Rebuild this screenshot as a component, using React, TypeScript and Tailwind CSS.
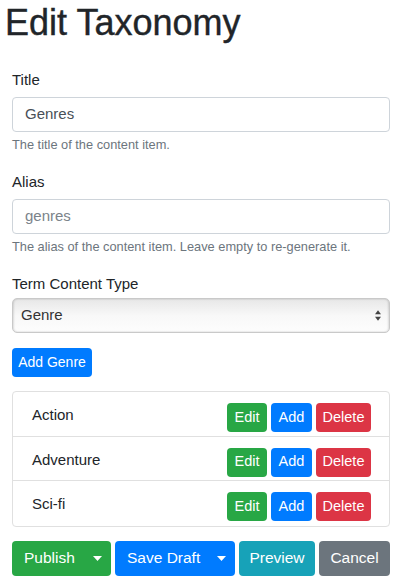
import React from 'react'

const font = { fontFamily: '"Liberation Sans", Arial, sans-serif' }

const rows = ['Action', 'Adventure', 'Sci-fi']

const Caret = () => (
  <svg width="9" height="5" viewBox="0 0 9 5" className="block">
    <path d="M0 0 L9 0 L4.5 5 Z" fill="white" />
  </svg>
)

const App: React.FunctionComponent = () => {
  return (
    <div className="w-[400px] h-[586px] bg-white text-[#212529] pl-[12px] pr-[10px] pt-[2px]" style={font}>
      <h1 className="text-[36px] leading-[42px] font-medium -ml-[7px] [-webkit-text-stroke:0.4px_#212529]">Edit Taxonomy</h1>

      {/* title */}
      <div className="mt-[25px]">
        <label className="block text-[15px] leading-[22px]">Title</label>
        <div className="mt-[6px] h-[35px] border border-[#ced4da] rounded-[4px] flex items-center px-[12px] text-[15px] text-[#495057]">
          Genres
        </div>
        <p className="mt-[4px] text-[12.8px] leading-[18px] text-[#6c757d]">The title of the content item.</p>
      </div>

      {/* alias */}
      <div className="mt-[17px]">
        <label className="block text-[15px] leading-[22px]">Alias</label>
        <div className="mt-[6px] h-[35px] border border-[#ced4da] rounded-[4px] flex items-center px-[12px] text-[15px] text-[#7b838a]">
          genres
        </div>
        <p className="mt-[4px] text-[12.8px] leading-[18px] text-[#6c757d]">
          The alias of the content item. Leave empty to re-generate it.
        </p>
      </div>

      {/* content type */}
      <div className="mt-[17px]">
        <label className="block text-[15px] leading-[22px]">Term Content Type</label>
        <div className="mt-[3px] h-[35px] border border-[#c9c9c9] rounded-[5px] flex items-center justify-between pl-[8px] pr-[8px] text-[15px] text-[#333] bg-gradient-to-b from-[#e7e7e7] via-[#f8f8f8] to-[#fdfdfd] shadow-[inset_1px_0_2px_rgba(0,0,0,0.12),inset_-1px_0_2px_rgba(0,0,0,0.12)]">
          <span>Genre</span>
          <svg width="6" height="11" viewBox="0 0 7 12">
            <path d="M3.5 0 L7 4.6 L0 4.6 Z" fill="#444" />
            <path d="M0 7.4 L7 7.4 L3.5 12 Z" fill="#444" />
          </svg>
        </div>
      </div>

      <button className="mt-[15px] h-[29px] w-[80px] rounded-[4px] bg-[#007bff] text-white text-[14px]">
        Add Genre
      </button>

      {/* terms */}
      <div className="mt-[14px] border border-[#e0e0e0] rounded-[4px]">
        {rows.map((r, i) => (
          <div
            key={r}
            className={
              'h-[44.5px] flex items-start justify-between pl-[19px] pr-[18px] pt-[11px]' +
              (i < rows.length - 1 ? ' border-b border-[#e0e0e0]' : '')
            }
          >
            <span className="text-[15px] leading-[22px] mt-[1px]">{r}</span>
            <div className="flex gap-[4px] text-[14.5px] text-white">
              <button className="h-[29px] w-[40px] rounded-[4px] bg-[#28a745]">Edit</button>
              <button className="h-[29px] w-[41px] rounded-[4px] bg-[#007bff]">Add</button>
              <button className="h-[29px] w-[55px] rounded-[4px] bg-[#dc3545]">Delete</button>
            </div>
          </div>
        ))}
      </div>

      {/* actions */}
      <div className="mt-[14px] flex gap-[4px] text-[15.5px] text-white">
        <div className="flex h-[35px] rounded-[4px] bg-[#28a745] w-[99px]">
          <button className="pl-[12px] pr-[10px]">Publish</button>
          <span className="flex-1 flex items-center justify-center"><Caret /></span>
        </div>
        <div className="flex h-[35px] rounded-[4px] bg-[#007bff] w-[120px]">
          <button className="pl-[12px] pr-[8px]">Save Draft</button>
          <span className="flex-1 flex items-center justify-center"><Caret /></span>
        </div>
        <button className="h-[35px] w-[76px] rounded-[4px] bg-[#17a2b8]">Preview</button>
        <button className="h-[35px] flex-1 rounded-[4px] bg-[#6c757d]">Cancel</button>
      </div>
    </div>
  )
}

export default App
